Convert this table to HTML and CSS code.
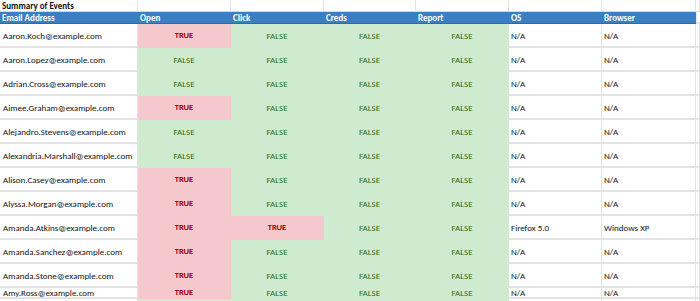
FILE: index.html
```html
<!DOCTYPE html>
<html>
<head>
<meta charset="utf-8">
<link rel="stylesheet" href="styles.css">
</head>
<body>
<table class="sheet">
  <colgroup>
    <col class="c-email"><col class="c-n"><col class="c-n"><col class="c-n3"><col class="c-n"><col class="c-n"><col class="c-br"><col>
  </colgroup>
  <tr class="title"><td>Summary of Events</td><td></td><td></td><td></td><td></td><td></td><td></td><td></td></tr>
  <tr class="head"><th>Email Address</th><th>Open</th><th>Click</th><th>Creds</th><th>Report</th><th>OS</th><th>Browser</th><th class="blank"></th></tr>
  <tr><td class="em">Aaron.Koch@example.com</td><td class="t">TRUE</td><td class="f">FALSE</td><td class="f">FALSE</td><td class="f">FALSE</td><td class="na">N/A</td><td class="na">N/A</td><td></td></tr>
  <tr><td class="em">Aaron.Lopez@example.com</td><td class="f">FALSE</td><td class="f">FALSE</td><td class="f">FALSE</td><td class="f">FALSE</td><td class="na">N/A</td><td class="na">N/A</td><td></td></tr>
  <tr><td class="em">Adrian.Cross@example.com</td><td class="f">FALSE</td><td class="f">FALSE</td><td class="f">FALSE</td><td class="f">FALSE</td><td class="na">N/A</td><td class="na">N/A</td><td></td></tr>
  <tr><td class="em">Aimee.Graham@example.com</td><td class="t">TRUE</td><td class="f">FALSE</td><td class="f">FALSE</td><td class="f">FALSE</td><td class="na">N/A</td><td class="na">N/A</td><td></td></tr>
  <tr><td class="em">Alejandro.Stevens@example.com</td><td class="f">FALSE</td><td class="f">FALSE</td><td class="f">FALSE</td><td class="f">FALSE</td><td class="na">N/A</td><td class="na">N/A</td><td></td></tr>
  <tr><td class="em">Alexandria.Marshall@example.com</td><td class="f">FALSE</td><td class="f">FALSE</td><td class="f">FALSE</td><td class="f">FALSE</td><td class="na">N/A</td><td class="na">N/A</td><td></td></tr>
  <tr><td class="em">Alison.Casey@example.com</td><td class="t">TRUE</td><td class="f">FALSE</td><td class="f">FALSE</td><td class="f">FALSE</td><td class="na">N/A</td><td class="na">N/A</td><td></td></tr>
  <tr><td class="em">Alyssa.Morgan@example.com</td><td class="t">TRUE</td><td class="f">FALSE</td><td class="f">FALSE</td><td class="f">FALSE</td><td class="na">N/A</td><td class="na">N/A</td><td></td></tr>
  <tr><td class="em">Amanda.Atkins@example.com</td><td class="t">TRUE</td><td class="t">TRUE</td><td class="f">FALSE</td><td class="f">FALSE</td><td class="na">Firefox 5.0</td><td class="na">Windows XP</td><td></td></tr>
  <tr><td class="em">Amanda.Sanchez@example.com</td><td class="t">TRUE</td><td class="f">FALSE</td><td class="f">FALSE</td><td class="f">FALSE</td><td class="na">N/A</td><td class="na">N/A</td><td></td></tr>
  <tr><td class="em">Amanda.Stone@example.com</td><td class="t">TRUE</td><td class="f">FALSE</td><td class="f">FALSE</td><td class="f">FALSE</td><td class="na">N/A</td><td class="na">N/A</td><td></td></tr>
  <tr class="short"><td class="em">Amy.Ross@example.com</td><td class="t">TRUE</td><td class="f">FALSE</td><td class="f">FALSE</td><td class="f">FALSE</td><td class="na">N/A</td><td class="na">N/A</td><td></td></tr>
  <tr><td class="em"></td><td class="f"></td><td class="f"></td><td class="f"></td><td class="f"></td><td class="na"></td><td class="na"></td><td></td></tr>
</table>
</body>
</html>
```
FILE: styles.css
```css
html, body {
  margin: 0;
  padding: 0;
  background: #ffffff;
  overflow: hidden;
  height: 301px;
}
.sheet {
  border-collapse: separate;
  border-spacing: 0;
  table-layout: fixed;
  width: 700px;
  font-family: "Carlito", "Lato", "Liberation Sans", sans-serif;
  font-size: 9px;
  color: #111;
}
.c-email { width: 138px; }
.c-n { width: 93px; }
.c-n3 { width: 92px; }
.c-br { width: 94px; }
.sheet td, .sheet th {
  padding: 0;
  box-sizing: border-box;
  white-space: nowrap;
  overflow: hidden;
  border-right: 1px solid #e3e3e3;
  border-bottom: 2px solid #e3e3e3;
  vertical-align: middle;
}
.title td {
  height: 12px;
  font-weight: bold;
  padding-left: 2px;
  border-bottom: 1px solid #d9d9d9;
  line-height: 10px;
}
.head th {
  height: 12px;
  background: #3a7fc3;
  color: #fff;
  font-weight: bold;
  text-align: left;
  padding-left: 2px;
  line-height: 11px;
  border-right: none;
  border-bottom: 1px solid #2c6aa8;
}
.head th.blank {
  background: #fff;
  border-left: 1px solid #e3e3e3;
  border-bottom: 2px solid #e3e3e3;
}
.sheet tr td { height: 24px; }
.sheet tr.title td { height: 12px; }
.sheet tr.short td { height: 11px; line-height: 9px; }
.em { padding-left: 3px !important; }
.na { padding-left: 2px !important; }
.t {
  background: #f5c8cd;
  color: #9c0006;
  text-align: center;
  font-weight: bold;
  font-size: 8.5px;
  border-right-color: #f5c8cd !important;
  border-bottom-color: #f5c8cd !important;
}
.f {
  background: #cfebcf;
  color: #1f6b1a;
  text-align: center;
  border-right-color: #cfebcf !important;
  border-bottom-color: #cfebcf !important;
}
```
